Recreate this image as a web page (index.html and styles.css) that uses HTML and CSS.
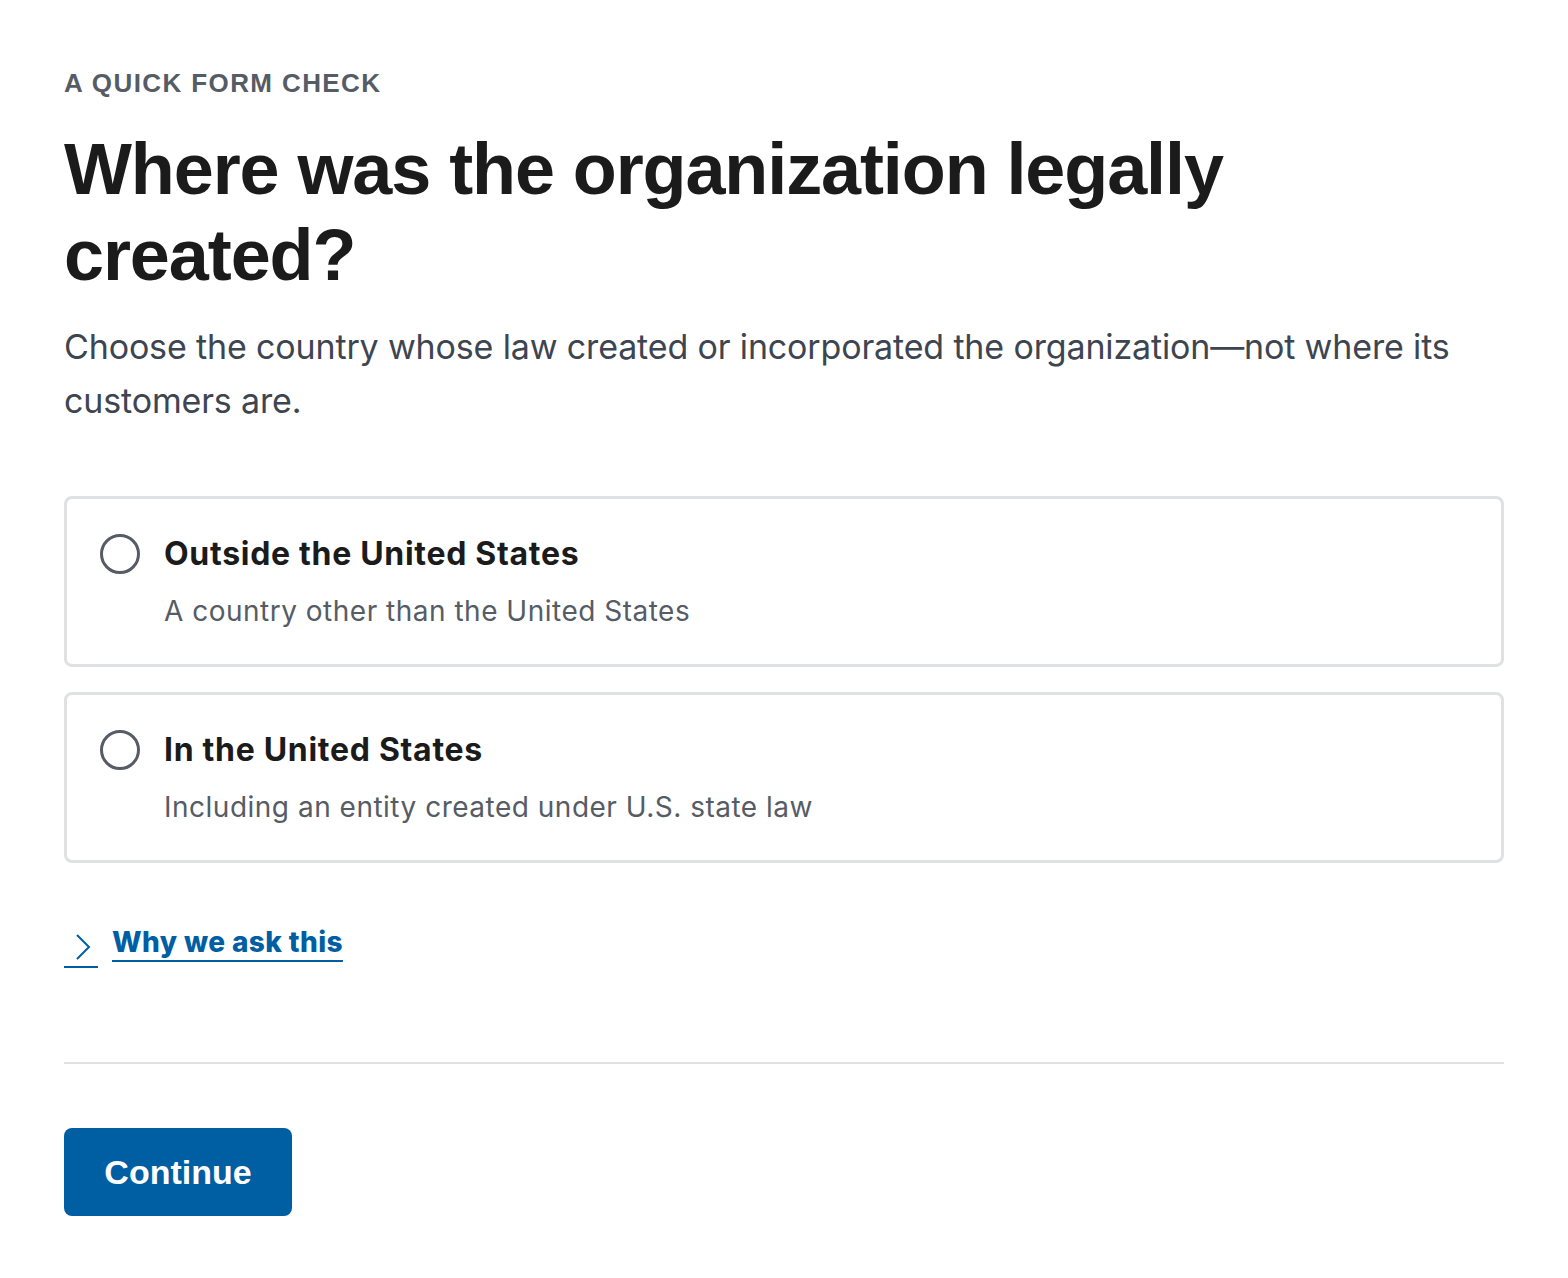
FILE: index.html
```html
<!DOCTYPE html>
<html lang="en">
<head>
<meta charset="utf-8">
<title>A quick form check</title>
<link rel="stylesheet" href="styles.css">
</head>
<body>
<main class="page">
  <p class="eyebrow">A QUICK FORM CHECK</p>
  <h1 class="title">Where was the organization legally created?</h1>
  <p class="lead">Choose the country whose law created or incorporated the organization—not where its customers are.</p>

  <div class="options">
    <label class="option">
      <span class="radio"></span>
      <span class="option-text">
        <span class="option-title">Outside the United States</span>
        <span class="option-hint">A country other than the United States</span>
      </span>
    </label>
    <label class="option">
      <span class="radio"></span>
      <span class="option-text">
        <span class="option-title">In the United States</span>
        <span class="option-hint">Including an entity created under U.S. state law</span>
      </span>
    </label>
  </div>

  <div class="why">
    <span class="why-toggle">
      <svg class="chevron" width="16" height="28" viewBox="0 0 16 28" aria-hidden="true">
        <path d="M2 2 L14 14 L2 26" fill="none" stroke="#005ea2" stroke-width="2"/>
      </svg>
    </span>
    <a class="why-link" href="#">Why we ask this</a>
  </div>

  <hr class="divider">

  <button class="continue" type="button">Continue</button>
</main>
</body>
</html>
```

FILE: styles.css
```css
* {
  box-sizing: border-box;
}

html, body {
  margin: 0;
  padding: 0;
  background: #ffffff;
}

body {
  font-family: Inter, "Liberation Sans", sans-serif;
  color: #1b1b1b;
}

.page {
  padding: 68px 64px 40px;
  display: flex;
  flex-direction: column;
  align-items: stretch;
}

.eyebrow {
  margin: 0;
  font-family: "Liberation Sans", Arial, sans-serif;
  font-weight: 700;
  font-size: 26px;
  line-height: 31px;
  letter-spacing: 1.4px;
  color: #565c65;
}

.title {
  margin: 27px 0 0;
  font-family: "Liberation Sans", Arial, sans-serif;
  font-weight: 700;
  font-size: 72px;
  line-height: 86px;
  letter-spacing: -1.1px;
  color: #1b1b1b;
}

.lead {
  margin: 22px 0 0;
  font-size: 34px;
  line-height: 54px;
  color: #3d4551;
  letter-spacing: -0.15px;
}

.options {
  margin-top: 68px;
  display: flex;
  flex-direction: column;
  gap: 25px;
}

.option {
  display: flex;
  align-items: flex-start;
  gap: 24px;
  border: 3px solid #dfe1e2;
  border-radius: 8px;
  padding: 35px 33px 33px;
  cursor: pointer;
}

.radio {
  flex: none;
  width: 40px;
  height: 40px;
  margin-top: 0;
  border: 3.5px solid #565c65;
  border-radius: 50%;
  background: #fff;
}

.option-text {
  display: flex;
  flex-direction: column;
  gap: 17px;
}

.option-title {
  font-weight: 700;
  font-size: 32px;
  line-height: 40px;
  letter-spacing: 0.7px;
  color: #1b1b1b;
}

.option-hint {
  font-size: 28px;
  line-height: 40px;
  letter-spacing: 0.5px;
  color: #565c65;
}

.why {
  margin-top: 53px;
  display: flex;
  align-items: center;
  gap: 14px;
}

.why-toggle {
  display: flex;
  align-items: center;
  justify-content: center;
  width: 34px;
  height: 40px;
  padding-left: 4px;
  border-bottom: 2px solid #005ea2;
  margin-top: 12px;
}

.chevron {
  display: block;
}

.why-link {
  font-weight: 800;
  font-size: 28px;
  line-height: 36px;
  color: #005ea2;
  text-decoration: underline;
  text-decoration-thickness: 2px;
  text-underline-offset: 8px;
  letter-spacing: 0.4px;
}

.divider {
  margin: 94px 0 0;
  border: 0;
  border-top: 2px solid #dfe1e2;
  height: 0;
  width: 100%;
}

.continue {
  margin-top: 64px;
  align-self: flex-start;
  width: 228px;
  height: 88px;
  border: 0;
  border-radius: 8px;
  background: #005ea2;
  color: #ffffff;
  font-family: "Liberation Sans", Arial, sans-serif;
  font-weight: 700;
  font-size: 34px;
  cursor: pointer;
}
```
